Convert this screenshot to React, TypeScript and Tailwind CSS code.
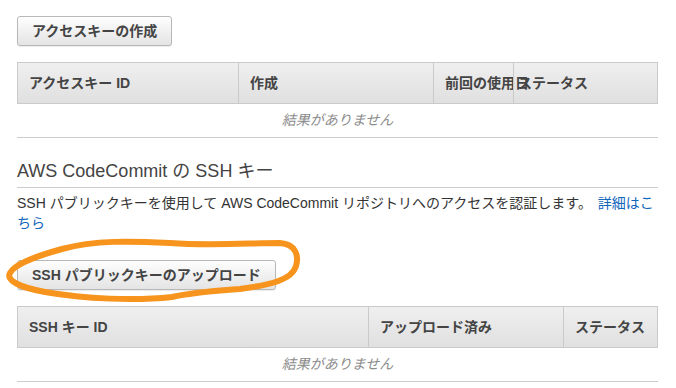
import React from "react";

const font = {
  fontFamily: '"Liberation Sans", "Noto Sans CJK JP", sans-serif',
};

function Button({ label }: { label: string }) {
  return (
    <button className="h-[30px] px-[14px] rounded-[3px] border border-[#b8b8b8] bg-gradient-to-b from-[#fefefe] to-[#e4e4e4] text-[14px] font-bold text-[#444] shadow-[0_1px_1px_rgba(0,0,0,0.08)] whitespace-nowrap">
      {label}
    </button>
  );
}

type Col = { label: string; width: string; pad?: string };

function EmptyTable({ cols }: { cols: Col[] }) {
  return (
    <div className="w-[641px]">
      <div className="flex h-[42px] border border-[#cacaca] bg-gradient-to-b from-[#efefef] to-[#e0e0e0]">
        {cols.map((c, i) => (
          <div
            key={c.label}
            className={`${c.width} ${i > 0 ? "border-l border-[#cacaca]" : ""} ${c.pad ?? "pl-[11px]"} flex items-center text-[14px] font-bold text-[#444] whitespace-nowrap overflow-visible`}
          >
            {c.label}
          </div>
        ))}
      </div>
      <div className="h-[34px] flex items-center justify-center border-b border-[#cccccc] text-[14px] italic text-[#8c8c8c]">
        結果がありません
      </div>
    </div>
  );
}

export default function App() {
  return (
    <div className="relative w-[676px] h-[388px] bg-white overflow-hidden" style={font}>
      <div className="pl-[17px] pt-[16px] flex flex-col">
        <div>
          <Button label="アクセスキーの作成" />
        </div>
        <div className="mt-[16px]">
          <EmptyTable
            cols={[
              { label: "アクセスキー ID", width: "w-[220px]" },
              { label: "作成", width: "w-[195px]" },
              { label: "前回の使用日", width: "w-[80px]" },
              { label: "ステータス", width: "flex-1", pad: "pl-[4px]" },
            ]}
          />
        </div>

        <h2 className="mt-[21px] w-[641px] h-[29px] pb-[4px] border-b border-[#cccccc] text-[18px] leading-[24px] text-[#444]">
          AWS CodeCommit の SSH キー
        </h2>

        <p className="mt-[5px] text-[14px] leading-[20px] text-[#333] whitespace-nowrap">
          SSH パブリックキーを使用して AWS CodeCommit
          リポジトリへのアクセスを認証します。{" "}
          <a className="text-[#1166bb] ml-[2px]" href="#">
            詳細はこ
            <br />
            ちら
          </a>
        </p>

        <div className="mt-[27px]">
          <Button label="SSH パブリックキーのアップロード" />
        </div>

        <div className="mt-[16px]">
          <EmptyTable
            cols={[
              { label: "SSH キー ID", width: "w-[350px]" },
              { label: "アップロード済み", width: "w-[195px]" },
              { label: "ステータス", width: "flex-1" },
            ]}
          />
        </div>
      </div>

      {/* orange hand-drawn annotation */}
      <svg
        className="absolute left-0 top-0 pointer-events-none"
        width="676"
        height="388"
        viewBox="0 0 676 388"
      >
        <path
          d="M 62 249 C 95 240, 130 241, 170 243 C 210 246, 250 243, 280 243 C 296 244, 299 256, 296 266 C 292 280, 270 285, 240 289 C 215 291, 195 292, 172 297 C 135 301, 85 299, 45 292 C 18 287, 6 280, 10 273 C 14 265, 30 258, 62 249 Z"
          fill="none"
          stroke="#f7941d"
          strokeWidth="6"
          strokeLinecap="round"
          strokeLinejoin="round"
        />
      </svg>
    </div>
  );
}
